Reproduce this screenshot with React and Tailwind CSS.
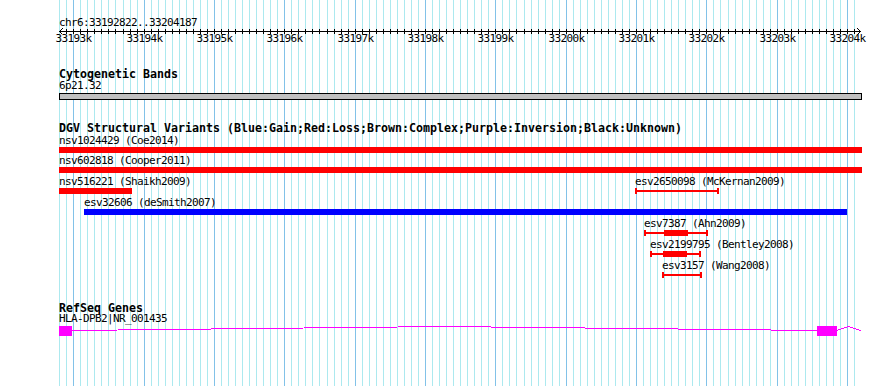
import React from "react";

// genome -> pixel mapping for the visible region chr6:33192822..33204187
const BP0 = 33192800;
const X0 = 59.2;
const SCALE = 0.07035; // px per bp
const LEFT = 59;
const RIGHT = 862;

const toX = (bp) => X0 + (bp - BP0) * SCALE;
const clampX = (bp) => Math.min(RIGHT, Math.max(LEFT, Math.round(toX(bp))));

const mono = "font-['DejaVu_Sans_Mono','Liberation_Mono',monospace]";
const small = "text-[11px] leading-[10px] tracking-[-0.62px]";
const bold = "text-[11.63px] leading-[12px] font-bold";

const RED = "#ff0000";
const BLUE = "#0000ff";

// DGV rows, each row is a list of features
const dgvRows = [
  { h: 20, items: [{ name: "nsv1024429 (Coe2014)", color: RED, start: 33150000, end: 33250000 }] },
  { h: 21, items: [{ name: "nsv602818 (Cooper2011)", color: RED, start: 33150000, end: 33250000 }] },
  {
    h: 21,
    items: [
      { name: "nsv516221 (Shaikh2009)", color: RED, start: 33180000, end: 33193835 },
      { name: "esv2650098 (McKernan2009)", color: RED, start: 33200985, end: 33202179, ranged: true },
    ],
  },
  { h: 21, items: [{ name: "esv32606 (deSmith2007)", color: BLUE, start: 33193153, end: 33203998 }] },
  {
    h: 21,
    items: [
      { name: "esv7387 (Ahn2009)", color: RED, start: 33201113, end: 33202023, ranged: true, thick: [33201397, 33201738] },
    ],
  },
  {
    h: 21,
    items: [
      { name: "esv2199795 (Bentley2008)", color: RED, start: 33201205, end: 33201923, ranged: true, thick: [33201383, 33201724] },
    ],
  },
  { h: 21, items: [{ name: "esv3157 (Wang2008)", color: RED, start: 33201362, end: 33201937, ranged: true }] },
];

function Grid() {
  const lines = [];
  for (let i = 0; i <= 113; i++) {
    const bp = BP0 + i * 100;
    const x = Math.round(toX(bp)) + 0.5;
    lines.push(
      <line key={i} x1={x} x2={x} y1={0} y2={386} stroke={bp % 1000 === 0 ? "#82c2e8" : "#ace9ef"} />
    );
  }
  return (
    <svg className="absolute inset-0" width="890" height="386" shapeRendering="crispEdges">
      {lines}
    </svg>
  );
}

function Ruler() {
  const ticks = [];
  for (let i = 1; i <= 113; i++) {
    const x = Math.round(toX(BP0 + i * 100)) + 0.5;
    ticks.push(<line key={i} x1={x} x2={x} y1={1} y2={6} stroke="#000" />);
  }
  const labels = [];
  for (let k = 33193; k <= 33204; k++) {
    labels.push({ k, x: Math.round(toX(k * 1000)) });
  }
  return (
    <>
      <svg className="block overflow-visible" width="890" height="6" shapeRendering="crispEdges">
        <line x1={LEFT} x2={RIGHT - 1} y1={3.5} y2={3.5} stroke="#000" />
        {ticks}
        <polyline points={`${LEFT + 3.5},0.5 ${LEFT + 0.5},3.5 ${LEFT + 3.5},6.5`} fill="none" stroke="#000" />
        <polyline points={`${RIGHT - 4.5},0.5 ${RIGHT - 1.5},3.5 ${RIGHT - 4.5},6.5`} fill="none" stroke="#000" />
      </svg>
      <div className="relative h-[10px]">
        {labels.map((l) => (
          <div
            key={l.k}
            className={`absolute top-0 w-[37px] text-center ${small}`}
            style={{ left: l.x - 18 }}
          >
            {l.k}k
          </div>
        ))}
      </div>
    </>
  );
}

function Feature({ f }) {
  const x1 = clampX(f.start);
  const x2 = clampX(f.end);
  return (
    <>
      <div className={`absolute top-0 whitespace-nowrap ${small}`} style={{ left: x1 }}>
        {f.name}
      </div>
      {f.ranged ? (
        <div className="absolute top-[11px] h-[6px]" style={{ left: x1, width: x2 - x1 }}>
          <div className="absolute left-0 top-0 h-[6px] w-[2px]" style={{ background: f.color }} />
          <div className="absolute right-0 top-0 h-[6px] w-[2px]" style={{ background: f.color }} />
          <div className="absolute left-0 right-0 top-[2px] h-[2px]" style={{ background: f.color }} />
          {f.thick && (
            <div
              className="absolute top-0 h-[6px]"
              style={{ left: clampX(f.thick[0]) - x1, width: clampX(f.thick[1]) - clampX(f.thick[0]), background: f.color }}
            />
          )}
        </div>
      ) : (
        <div className="absolute top-[11px] h-[6px]" style={{ left: x1, width: x2 - x1, background: f.color }} />
      )}
    </>
  );
}

function GeneModel() {
  // HLA-DPB2 | NR_001435
  const e1 = [clampX(33180000), clampX(33192982)];
  const e2 = [clampX(33203572), clampX(33203856)];
  const mid = (e1[1] + e2[0]) / 2;
  const pink = "#ff00ff";
  return (
    <svg className="block overflow-visible" width="890" height="10" shapeRendering="crispEdges">
      <rect x={e1[0]} y={0} width={e1[1] - e1[0]} height={10} fill={pink} />
      <rect x={e2[0]} y={0} width={e2[1] - e2[0]} height={10} fill={pink} />
      <polyline points={`${e1[1]},4.5 ${mid},0.5 ${e2[0]},4.5`} fill="none" stroke={pink} />
      <polyline points={`${e2[1]},4.5 ${e2[1] + 11},0.5 ${RIGHT - 1},4.5`} fill="none" stroke={pink} />
    </svg>
  );
}

export default function App() {
  return (
    <div className={`relative w-[890px] h-[386px] overflow-hidden bg-white text-black ${mono}`}>
      <Grid />
      <div className="relative flex flex-col pt-[18px]">
        <div className={`pl-[59px] h-[10px] ${small}`}>chr6:33192822..33204187</div>
        <Ruler />

        {/* Cytogenetic Bands */}
        <div className={`mt-[24px] pl-[59px] ${bold}`}>Cytogenetic Bands</div>
        <div className={`mt-[1px] pl-[59px] ${small}`}>6p21.32</div>
        <div className="mt-[2px] ml-[59px] w-[803px] h-[7px] border border-black bg-[#c0c0c0]" />

        {/* DGV */}
        <div className={`mt-[22px] pl-[59px] whitespace-nowrap ${bold}`}>
          DGV Structural Variants (Blue:Gain;Red:Loss;Brown:Complex;Purple:Inversion;Black:Unknown)
        </div>
        <div className="mt-[2px] flex flex-col">
          {dgvRows.map((row, i) => (
            <div key={i} className="relative" style={{ height: row.h }}>
              {row.items.map((f) => (
                <Feature key={f.name} f={f} />
              ))}
            </div>
          ))}
        </div>

        {/* RefSeq */}
        <div className={`mt-[20px] pl-[59px] h-[12px] ${bold}`}>RefSeq Genes</div>
        <div className={`pl-[59px] ${small}`}>HLA-DPB2|NR_001435</div>
        <div className="mt-[2px]">
          <GeneModel />
        </div>
      </div>
    </div>
  );
}
